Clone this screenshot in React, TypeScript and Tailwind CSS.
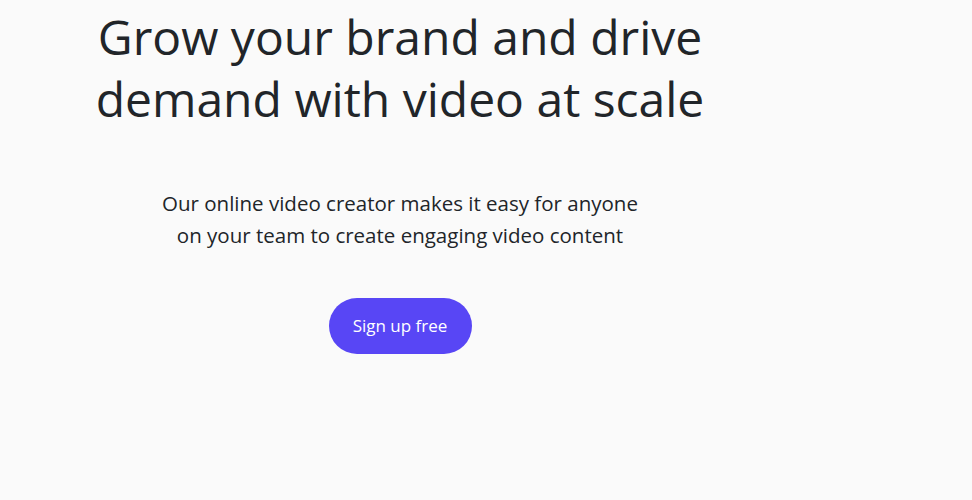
import React from "react";

export default function App() {
  return (
    <div
      className="min-h-[500px] w-full bg-[#fafafa] text-[#212529]"
      style={{ fontFamily: '"Open Sans", "Noto Sans", sans-serif' }}
    >
      <div className="flex w-[800px] flex-col items-center text-center">
        <h1 className="mt-[6px] text-[48px] font-normal leading-[62px]">
          Grow your brand and drive
          <br />
          demand with video at scale
        </h1>
        <p className="mt-[57px] text-[20.5px] leading-[32px]">
          Our online video creator makes it easy for anyone
          <br />
          on your team to create engaging video content
        </p>
        <button className="mt-[47px] h-[56px] w-[143px] rounded-full bg-[#5846f5] text-[17px] text-white">
          Sign up free
        </button>
      </div>
    </div>
  );
}
